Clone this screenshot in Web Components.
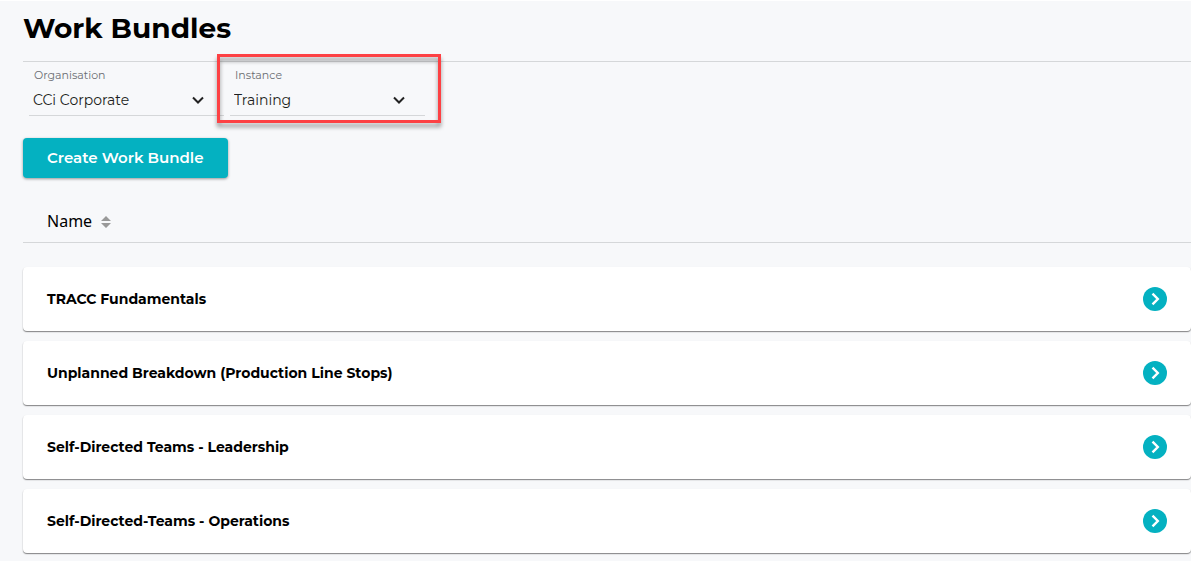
<!DOCTYPE html>
<html lang="en">
<head>
<meta charset="utf-8">
<title>Work Bundles</title>
<style>
  html { background: #f7f8fa; }
  body {
    margin: 0;
    color: #000;
    font-family: Montserrat, Inter, "Open Sans", sans-serif;
    --accent: #04b1c1;
    --line: #d5d7d9;
  }
</style>
</head>
<body>
<work-bundles-page></work-bundles-page>

<script>
class BaseElement extends HTMLElement {
  render(html) {
    this.attachShadow({ mode: 'open' }).innerHTML =
      '<style>*, ::before, ::after { box-sizing: border-box; } :host { box-sizing: border-box; }</style>' + html;
  }
}

customElements.define('select-field', class extends BaseElement {
  connectedCallback() {
    this.render(`
      <style>
        :host { display: flex; flex-direction: column; position: relative; width: 195px; height: 54px; border-bottom: 1px solid var(--line); }
        label { padding: 6px 0 0 5px; font-size: 11px; line-height: 15px; color: #6a6d72; }
        .control { display: flex; flex: none; align-items: center; height: 34px; }
        select { appearance: none; width: 100%; height: 32px; margin: 0; padding: 0 32px 0 4px; border: 0; background: none; font: inherit; font-size: 14px; color: #1c1e20; }
        svg { flex: none; width: 14px; height: 10px; margin-left: -33px; margin-right: 19px; pointer-events: none; }
        :host([highlighted])::after {
          content: ""; position: absolute; inset: -8px -16px -8px -13px;
          border: 3px solid #fd4144; filter: drop-shadow(0 4px 2px rgba(0, 0, 0, .4)); pointer-events: none;
        }
      </style>
      <label for="value">${this.getAttribute('label')}</label>
      <div class="control">
        <select id="value"><option>${this.getAttribute('value')}</option></select>
        <svg viewBox="0 0 14 10" aria-hidden="true"><path d="M2 2.5 7 7.5 12 2.5" fill="none" stroke="#222" stroke-width="2"/></svg>
      </div>`);
  }
});

customElements.define('primary-button', class extends BaseElement {
  connectedCallback() {
    this.render(`
      <style>
        :host { display: inline-flex; }
        button { height: 40px; margin: 0; padding: 0 24px; border: 0; border-radius: 4px; background: var(--accent); color: #fff;
          font: inherit; font-size: 15px; font-weight: 600; line-height: 20px; white-space: nowrap; box-shadow: 0 1px 3px rgba(0, 0, 0, .4); cursor: pointer; }
      </style>
      <button type="button"><slot></slot></button>`);
  }
});

customElements.define('sort-header', class extends BaseElement {
  connectedCallback() {
    this.render(`
      <style>
        :host { display: flex; height: 43px; padding: 0 24px; border-bottom: 1px solid var(--line); }
        button { display: flex; align-items: center; gap: 9px; height: 42px; margin: 0; padding: 0; border: 0; background: none; color: inherit;
          font: 16px/22px "Noto Sans", sans-serif; cursor: pointer; }
        svg { width: 10px; height: 12px; margin-top: 2px; }
      </style>
      <button type="button"><slot></slot>
        <svg viewBox="0 0 10 12" aria-hidden="true"><path d="M0 5 5 0l5 5zM0 7h10l-5 5z" fill="#999"/></svg>
      </button>`);
  }
});

customElements.define('bundle-card', class extends BaseElement {
  connectedCallback() {
    this.render(`
      <style>
        :host { display: block; }
        a { display: flex; align-items: center; justify-content: space-between; height: 64px; padding: 0 24px; border-radius: 4px;
          background: #fff; color: inherit; text-decoration: none; font-size: 14px; font-weight: 700; line-height: 20px;
          box-shadow: 0 1px 1px rgba(0, 0, 0, .4), 0 1px 2px rgba(0, 0, 0, .12); }
        svg { flex: none; width: 24px; height: 24px; }
      </style>
      <a href="#"><slot></slot>
        <svg viewBox="0 0 24 24" aria-hidden="true"><circle cx="12" cy="12" r="12" fill="#04b1c1"/><path d="m9.5 6.7 5.3 5.3-5.3 5.3" fill="none" stroke="#fff" stroke-width="2.4"/></svg>
      </a>`);
  }
});

customElements.define('work-bundles-page', class extends BaseElement {
  connectedCallback() {
    this.render(`
      <style>
        :host { display: block; padding: 7px 0 8px 23px; border-top: 1px solid #fff; }
        h1 { margin: 0; font-size: 28px; font-weight: 700; line-height: 40px; }
        .filters { display: flex; gap: 6px; margin-top: 13px; padding-left: 6px; border-top: 1px solid var(--line); }
        primary-button { margin-top: 22px; }
        sort-header { margin-top: 22px; }
        .cards { display: grid; gap: 10px; margin-top: 24px; }
      </style>
      <main>
        <h1>Work Bundles</h1>
        <div class="filters">
          <select-field label="Organisation" value="CCi Corporate"></select-field>
          <select-field label="Instance" value="Training" highlighted></select-field>
        </div>
        <primary-button>Create Work Bundle</primary-button>
        <sort-header>Name</sort-header>
        <div class="cards">
          <bundle-card>TRACC Fundamentals</bundle-card>
          <bundle-card>Unplanned Breakdown (Production Line Stops)</bundle-card>
          <bundle-card>Self-Directed Teams - Leadership</bundle-card>
          <bundle-card>Self-Directed-Teams - Operations</bundle-card>
        </div>
      </main>`);
  }
});
</script>
</body>
</html>
